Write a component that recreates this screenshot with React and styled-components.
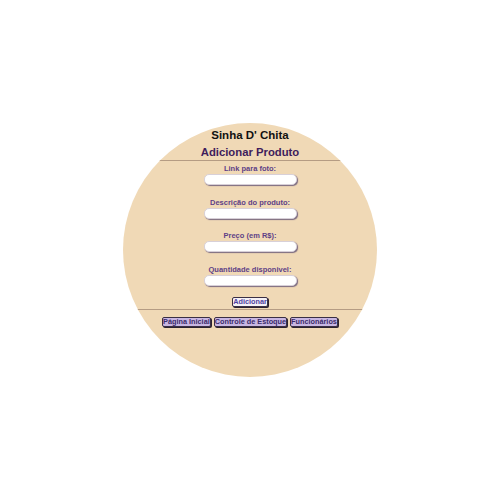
import React from 'react';
import styled, { createGlobalStyle } from 'styled-components';

const Global = createGlobalStyle`
  html, body {
    margin: 0;
    padding: 0;
    background: #fff;
  }
  body {
    width: 500px;
    height: 500px;
    display: flex;
    align-items: center;
    justify-content: center;
    font-family: 'Liberation Sans', Arial, sans-serif;
  }
`;

const Circle = styled.div`
  width: 254px;
  height: 254px;
  border-radius: 50%;
  background-color: #f0d9b6;
  overflow: hidden;
  display: flex;
  flex-direction: column;
  align-items: center;
  box-sizing: border-box;
  padding-top: 5px;
`;

const Title = styled.h1`
  margin: 0;
  font-size: 11.5px;
  font-weight: bold;
  color: #111;
  line-height: 15px;
`;

const Subtitle = styled.h2`
  margin: 1px 0 0;
  font-size: 11.3px;
  font-weight: bold;
  color: #3f1d5c;
  line-height: 16px;
`;

const Line = styled.div`
  width: 100%;
  height: 0;
  border-top: 1px solid #b59c83;
  margin: ${(p) => p.margin || '0'};
`;

const Form = styled.form`
  display: flex;
  flex-direction: column;
  align-items: center;
  margin-top: 3px;
`;

const Label = styled.label`
  font-size: 7.5px;
  font-weight: bold;
  color: #5e3f86;
  line-height: 10px;
  margin-top: ${(p) => (p.first ? '0' : '12.7px')};
`;

const Input = styled.input`
  width: 93px;
  height: 11px;
  box-sizing: border-box;
  margin: 0;
  border: 1px solid #d8d0d8;
  border-radius: 5px;
  background: #fff;
  box-shadow: 1px 1px 1px #7a6a80;
  outline: none;
  padding: 0;
`;

const Button = styled.button`
  font-family: 'Liberation Sans', Arial, sans-serif;
  font-size: 7.3px;
  font-weight: bold;
  line-height: 8px;
  padding: 0 0;
  border: 1px solid #3a2f44;
  border-radius: 2px;
  background: ${(p) => (p.light ? '#f4f0f6' : '#c8b6e2')};
  color: ${(p) => (p.light ? '#4f3fa0' : '#3a2a6a')};
  box-shadow: 1px 1px 0 #2c2230;
  cursor: pointer;
`;

const SubmitRow = styled.div`
  margin-top: 4px;
`;

const Nav = styled.nav`
  display: flex;
  gap: 3px;
  margin-top: 7px;
`;

export default function App() {
  return (
    <>
      <Global />
      <Circle>
        <Title>Sinha D' Chita</Title>
        <Subtitle>Adicionar Produto</Subtitle>
        <Line margin="0" />
        <Form onSubmit={(e) => e.preventDefault()}>
          <Label first>Link para foto:</Label>
          <Input type="text" />
          <Label>Descrição do produto:</Label>
          <Input type="text" />
          <Label>Preço (em R$):</Label>
          <Input type="text" />
          <Label>Quantidade disponivel:</Label>
          <Input type="text" />
          <SubmitRow>
            <Button light type="submit">Adicionar</Button>
          </SubmitRow>
        </Form>
        <Line margin="1px 0 0" />
        <Nav>
          <Button>Página Inicial</Button>
          <Button>Controle de Estoque</Button>
          <Button>Funcionários</Button>
        </Nav>
      </Circle>
    </>
  );
}
